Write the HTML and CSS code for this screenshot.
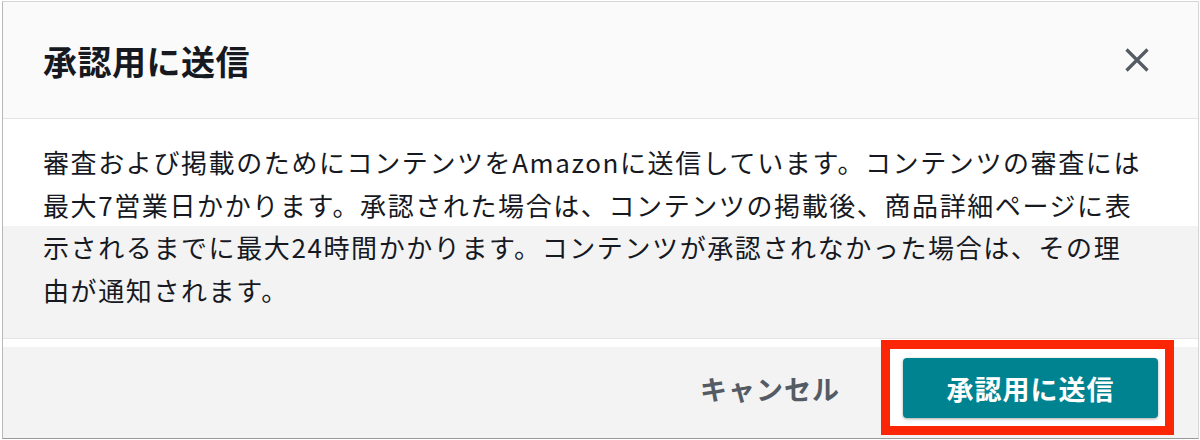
FILE: index.html
```html
<!DOCTYPE html>
<html lang="ja">
<head>
<meta charset="utf-8">
<title>承認用に送信</title>
<link rel="stylesheet" href="styles.css">
</head>
<body>
<div class="modal">
  <header class="modal-header">
    <h2 class="modal-title">承認用に送信</h2>
    <button class="close" aria-label="閉じる">
      <svg width="26" height="26" viewBox="0 0 26 26"><path d="M2.5 2.5 L23.5 23.5 M23.5 2.5 L2.5 23.5" stroke="#545b64" stroke-width="3.2" fill="none"/></svg>
    </button>
  </header>
  <div class="modal-body">
    <p class="message">審査および掲載のためにコンテンツをAmazonに送信しています。コンテンツの審査には<br>最大7営業日かかります。承認された場合は、コンテンツの掲載後、商品詳細ページに表<br>示されるまでに最大24時間かかります。コンテンツが承認されなかった場合は、その理<br>由が通知されます。</p>
  </div>
  <footer class="modal-footer">
    <button class="btn-link">キャンセル</button>
    <span class="highlight">
      <button class="btn-primary">承認用に送信</button>
    </span>
  </footer>
</div>
</body>
</html>
```

FILE: styles.css
```css
* { box-sizing: border-box; }
html, body { margin: 0; padding: 0; background: #ffffff; }
body {
  font-family: "Noto Sans CJK JP", "Noto Sans", sans-serif;
  color: #16191f;
  height: 440px;
  overflow: hidden;
}
.modal {
  margin: 1px 0 0 2px;
  width: 1197px;
  height: 438px;
  border: 1px solid #d6d6d6;
  border-left-color: #b9b9b9;
  border-bottom-color: #9a9a9a;
  display: flex;
  flex-direction: column;
  background: #f3f3f3;
}
.modal-header {
  height: 117px;
  flex: none;
  background: #fafafa;
  border-bottom: 1px solid #e4e4e4;
  display: flex;
  align-items: center;
  justify-content: space-between;
  padding: 0 48px 0 40px;
}
.modal-title {
  margin: 0;
  font-size: 34px;
  font-weight: 700;
  letter-spacing: 0.5px;
}
.close {
  border: 0;
  background: none;
  padding: 0;
  width: 26px;
  height: 26px;
  display: flex;
}
.modal-body {
  flex: none;
  height: 220px;
  background: linear-gradient(#ffffff 0, #ffffff 107px, #f3f3f3 107px);
  border-bottom: 1px solid #e4e4e4;
  padding: 22px 20px 0 40px;
}
.message {
  margin: 0;
  font-size: 26px;
  line-height: 42.5px;
  letter-spacing: 1.6px;
}
.modal-footer {
  flex: 1;
  border-top: 8px solid #ffffff;
  background: #f3f3f3;
  display: flex;
  justify-content: flex-end;
  align-items: flex-start;
  padding: 11px 40px 0 0;
}
.btn-link {
  border: 0;
  background: none;
  font-family: inherit;
  font-size: 27px;
  font-weight: 700;
  color: #545b64;
  height: 60px;
  padding: 0;
  margin-right: 63px;
  letter-spacing: 1px;
}
.highlight {
  position: relative;
  z-index: 0;
  display: flex;
}
.highlight::before {
  content: "";
  position: absolute;
  top: -18px;
  left: -22px;
  right: -16px;
  bottom: -17px;
  border: 9px solid #fa2605;
  background: #ffffff;
  z-index: -1;
}
.btn-primary {
  width: 255px;
  height: 60px;
  border: 0;
  border-radius: 4px;
  background: #008391;
  color: #ffffff;
  font-family: inherit;
  font-size: 27px;
  font-weight: 700;
  letter-spacing: 1px;
  box-shadow: 0 1px 3px rgba(0, 0, 0, 0.35);
}
```
